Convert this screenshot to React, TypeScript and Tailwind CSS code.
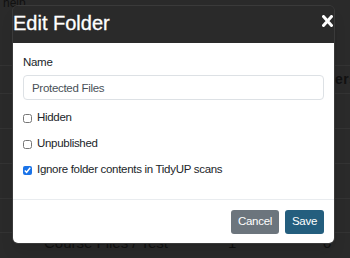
import React from 'react';

const font = { fontFamily: '"Liberation Sans", Arial, sans-serif' };

function BackgroundPage() {
  return (
    <div className="absolute inset-0 bg-[#2a2a2a] text-[#111]" style={font}>
      <div className="flex h-[12px] w-[29px] items-start justify-end whitespace-nowrap text-[12px] leading-[12px]">
        <span className="-mt-[3px]">Let us know if you need more help.</span>
      </div>
      {/* table rows behind the overlay */}
      <div className="mt-[53px] border-t border-[#333]" />
      <div className="flex h-[28px] items-center border-b border-[#333] pl-[316px] text-[14px] font-bold tracking-[0.5px] whitespace-nowrap">
        <span>Users</span>
      </div>
      <div className="h-[35px] border-b border-[#333]" />
      <div className="h-[35px] border-b border-[#333]" />
      <div className="h-[35px] border-b border-[#333]" />
      <div className="h-[34px] border-b border-[#333]" />
      <div className="flex h-[20px] items-center text-[15px]">
        <span className="ml-[44px] w-[184px]">Course Files / Test</span>
        <span className="w-[95px]">1</span>
        <span>0</span>
      </div>
    </div>
  );
}

export default function App() {
  return (
    <div className="relative h-[258px] w-[350px] overflow-hidden">
      <BackgroundPage />

      {/* MODAL */}
      <div
        className="absolute left-[12px] top-[5px] w-[323px] overflow-hidden rounded-[6px] border border-[#3a3a3a] shadow-lg"
        style={font}
      >
        <div className="flex h-[37px] items-start justify-between bg-[#2a2a2a] pr-[1px]">
          <h2 className="mt-[2px] text-[20px] leading-[30px] font-normal text-white [-webkit-text-stroke:0.3px_white]">Edit Folder</h2>
          <svg width="11" height="12" viewBox="0 0 11 12" className="mt-[9px]">
            <path d="M1.5 1.5 L9.5 10.5 M9.5 1.5 L1.5 10.5" stroke="white" strokeWidth="3" strokeLinecap="round" />
          </svg>
        </div>

        <div className="bg-white">
          <div className="px-[10px] pt-[11px] pb-[21px] text-[11.5px] tracking-[-0.3px] text-[#212529]">
            <label className="block leading-[16px]">Name</label>
            <input
              className="mt-[5px] block h-[25px] w-full rounded-[4px] border border-[#dde1e5] px-[8px] text-[11.5px] tracking-[-0.3px] text-[#495057] outline-none"
              defaultValue="Protected Files"
              style={font}
            />
            <div className="mt-[10px] flex flex-col gap-[10px]">
              <label className="flex h-[16px] items-center gap-[5px]">
                <input type="checkbox" className="h-[9px] w-[9px]" />
                Hidden
              </label>
              <label className="flex h-[16px] items-center gap-[5px]">
                <input type="checkbox" className="h-[9px] w-[9px]" />
                Unpublished
              </label>
              <label className="flex h-[16px] items-center gap-[5px]">
                <input type="checkbox" defaultChecked className="h-[9px] w-[9px] accent-[#1a73e8]" />
                Ignore folder contents in TidyUP scans
              </label>
            </div>
          </div>

          <div className="flex justify-end gap-[6px] border-t border-[#e9ecef] px-[10px] pt-[10px] pb-[9px]">
            <button className="h-[24px] w-[48px] rounded-[3px] bg-[#6c757d] text-[11.5px] tracking-[-0.3px] text-white">Cancel</button>
            <button className="h-[24px] w-[39px] rounded-[3px] bg-[#245e7e] text-[11.5px] tracking-[-0.3px] text-white">Save</button>
          </div>
        </div>
      </div>
    </div>
  );
}
